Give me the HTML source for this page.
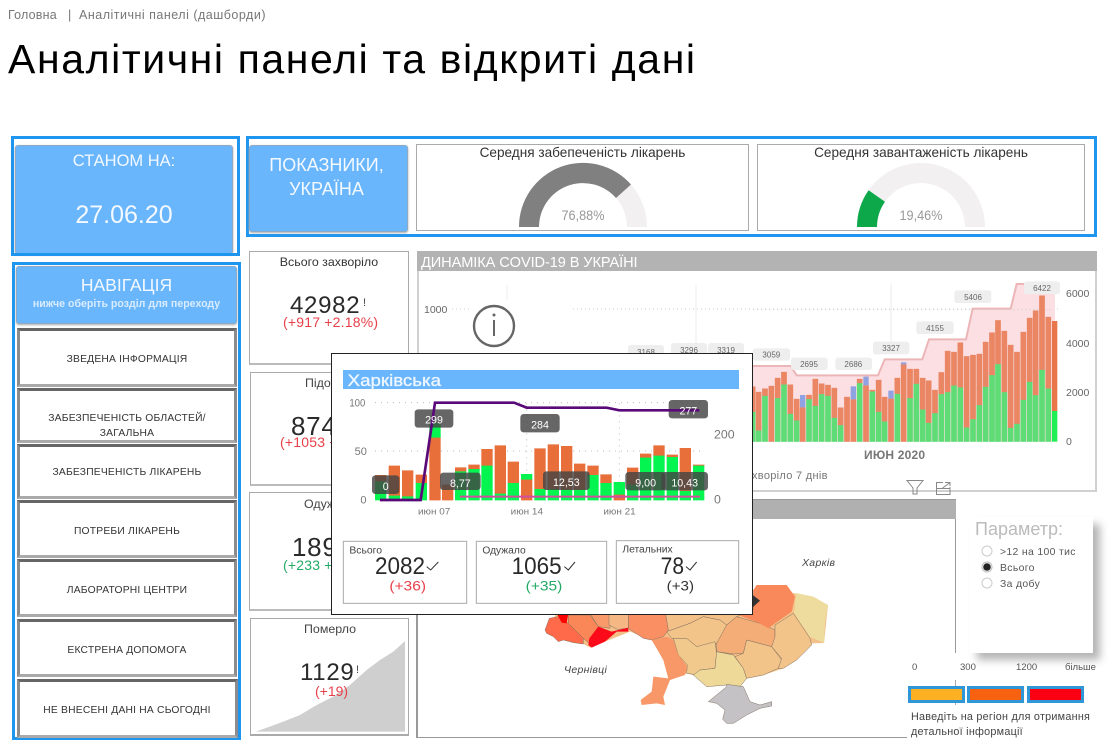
<!DOCTYPE html>
<html lang="uk"><head><meta charset="utf-8"><title>Аналітичні панелі та відкриті дані</title>
<style>
html,body{margin:0;padding:0;background:#fff;width:1113px;height:753px;overflow:hidden;font-family:"Liberation Sans","DejaVu Sans",sans-serif}
.a{position:absolute;box-sizing:border-box}
.t{position:absolute;white-space:nowrap;line-height:1}
.c{text-align:center}
.frame{border:3px solid #1e96f0}
.blue{background:#69b6fd;border:1px solid #8ea9c4;border-radius:3px;box-shadow:0 1px 2px #aaa}
.w{color:#f4f9ff}
.card{border:1px solid #aaa;background:#fff}
.nav{left:17px;width:220px;background:#fff;border:3px solid #8c8c8c;border-top-color:#666;border-bottom-color:#aaa}
.n{left:17px;width:220px;font-size:10.3px;letter-spacing:.2px;color:#333;text-align:center}
.num{font-size:24px;letter-spacing:.7px;color:#2a2a2a}
.red{color:#e8404a}.grn{color:#22aa66}
svg{position:absolute;overflow:visible}
svg text{font-family:"Liberation Sans","DejaVu Sans",sans-serif}
</style></head><body>

<div class="t" style="left:8px;top:9px;font-size:12.5px;letter-spacing:.2px;color:#777">Головна</div>
<div class="t" style="left:68px;top:9px;font-size:12.5px;color:#777">|</div>
<div class="t" style="left:79px;top:9px;font-size:12.5px;letter-spacing:.5px;color:#777">Аналітичні панелі (дашборди)</div>
<h1 class="t" style="margin:0;left:8px;top:39px;font-size:41px;font-weight:400;letter-spacing:1.6px;color:#000">Аналітичні панелі та відкриті дані</h1>

<!-- date -->
<div class="a blue" style="left:15px;top:145px;width:218px;height:109px"></div>
<div class="a frame" style="left:11px;top:136px;width:229px;height:120px"></div>
<div class="t c w" style="left:15px;width:218px;top:153px;font-size:16.5px">СТАНОМ НА:</div>
<div class="t c w" style="left:15px;width:218px;top:203px;font-size:25px">27.06.20</div>

<!-- indicators -->
<div class="a frame" style="left:246px;top:136px;width:851px;height:101px"></div>
<div class="a blue" style="left:249px;top:145px;width:159px;height:87px"></div>
<div class="t c w" style="left:247px;width:159px;top:153px;font-size:18px;line-height:24px">ПОКАЗНИКИ,<br>УКРАЇНА</div>
<div class="a card" style="left:416px;top:144px;width:333px;height:87px"></div>
<div class="a card" style="left:757px;top:144px;width:328px;height:87px"></div>
<div class="t c" style="left:416px;width:333px;top:146px;font-size:13.6px;color:#333">Середня забепеченість лікарень</div>
<div class="t c" style="left:757px;width:328px;top:146px;font-size:13.6px;color:#333">Середня завантаженість лікарень</div>
<svg style="left:0;top:0" width="1113" height="753">
<path d="M519 227A64 64 0 0 1 647 227H627A44 44 0 0 0 539 227Z" fill="#f2f0f0"/>
<path d="M519 227A64 64 0 0 1 631 184.5L616 198A44 44 0 0 0 539 227Z" fill="#808080"/>
<path d="M857 227A64 64 0 0 1 985 227H965A44 44 0 0 0 877 227Z" fill="#f2f0f0"/>
<path d="M857 227A64 64 0 0 1 868.6 190.3L885 201.8A44 44 0 0 0 877 227Z" fill="#0da84a"/>
<text x="583" y="220" text-anchor="middle" font-size="14" fill="#999" textLength="43" lengthAdjust="spacingAndGlyphs">76,88%</text>
<text x="921" y="220" text-anchor="middle" font-size="14" fill="#999" textLength="43" lengthAdjust="spacingAndGlyphs">19,46%</text>
</svg>

<!-- KPI cards -->
<div class="a card" style="left:249px;top:251px;width:160px;height:114px;border-bottom:2px solid #bbb"></div>
<div class="t c" style="left:249px;width:160px;top:256px;font-size:12.4px;color:#333">Всього захворіло</div>
<div class="t num" style="left:290px;top:294px">42982</div><div class="t" style="left:363px;top:298px;font-size:11px;color:#444">!</div>
<div class="t red" style="left:283px;top:315px;font-size:14px;letter-spacing:.2px">(+917 +2.18%)</div>

<div class="a card" style="left:250px;top:372px;width:159px;height:114px;border-bottom:2px solid #bbb"></div>
<div class="t" style="left:305px;top:377px;font-size:12.4px;color:#444">Підозри</div>
<div class="t num" style="left:291px;top:413px;font-size:26px">8741</div>
<div class="t red" style="left:280px;top:435px;font-size:14px;letter-spacing:.2px">(+1053 +1%)</div>

<div class="a card" style="left:249px;top:492px;width:160px;height:119px;border-bottom:2px solid #bbb"></div>
<div class="t" style="left:304px;top:498px;font-size:12.4px;color:#444">Одужало</div>
<div class="t num" style="left:292px;top:534px;font-size:26px">18900</div>
<div class="t grn" style="left:283px;top:558px;font-size:14px;letter-spacing:.2px">(+233 +1%)</div>

<div class="a" style="left:250px;top:618px;width:159px;height:118px;border:1px solid #aaa;border-width:1px 1px 2px 1px"></div>
<svg style="left:0;top:500px" width="420" height="253" viewBox="0 0 1260 759" preserveAspectRatio="none">
<path d="M768 695L850 665L900 645L950 615L1000 590L1050 555L1100 510L1140 480L1180 455L1215 423V695Z" fill="#cfcfcf"/>
</svg>
<div class="t c" style="left:250px;width:160px;top:623px;font-size:12.4px;color:#444">Померло</div>
<div class="t num" style="left:300px;top:661px">1129</div><div class="t" style="left:356px;top:665px;font-size:11px;color:#444">!</div>
<div class="t red" style="left:315px;top:684px;font-size:14px">(+19)</div>

<!-- nav -->
<div class="a frame" style="left:12px;top:262px;width:229px;height:478px"></div>
<div class="a blue" style="left:16px;top:266px;width:221px;height:58px"></div>
<div class="t c w" style="left:16px;width:221px;top:277px;font-size:17.5px">НАВІГАЦІЯ</div>
<div class="t c" style="left:16px;width:221px;top:299px;font-size:10.6px;font-weight:700;color:#d9ecff">нижче оберіть розділ для переходу</div>
<div class="a nav" style="top:328px;height:59px"></div>
<div class="a nav" style="top:388px;height:55px"></div>
<div class="a nav" style="top:444px;height:55px"></div>
<div class="a nav" style="top:500px;height:58px"></div>
<div class="a nav" style="top:559px;height:58px"></div>
<div class="a nav" style="top:619px;height:58px"></div>
<div class="a nav" style="top:679px;height:59px;left:17px;width:221px"></div>
<div class="t n" style="top:355px">ЗВЕДЕНА ІНФОРМАЦІЯ</div>
<div class="t n" style="top:414px">ЗАБЕЗПЕЧЕНІСТЬ ОБЛАСТЕЙ/</div>
<div class="t n" style="top:429px">ЗАГАЛЬНА</div>
<div class="t n" style="top:468px">ЗАБЕЗПЕЧЕНІСТЬ ЛІКАРЕНЬ</div>
<div class="t n" style="top:527px">ПОТРЕБИ ЛІКАРЕНЬ</div>
<div class="t n" style="top:586px">ЛАБОРАТОРНІ ЦЕНТРИ</div>
<div class="t n" style="top:646px">ЕКСТРЕНА ДОПОМОГА</div>
<div class="t n" style="top:706px">НЕ ВНЕСЕНІ ДАНІ НА СЬОГОДНІ</div>

<!-- main chart -->
<div class="a" style="left:417px;top:251px;width:680px;height:241px;border:2px solid #d0d0d0;border-top:0;background:#fff"></div>
<div class="a" style="left:417px;top:251px;width:680px;height:20px;background:#b3b3b3"></div>
<div class="t" style="left:421px;top:256px;font-size:14.6px;color:#fff;letter-spacing:-.1px">ДИНАМІКА COVID-19 В УКРАЇНІ</div>
<svg style="left:0;top:0" width="1113" height="753">
<line x1="507" y1="285" x2="507" y2="300" stroke="#eee"/>
<line x1="696" y1="285" x2="696" y2="345" stroke="#eee"/>
<line x1="891" y1="285" x2="891" y2="345" stroke="#eee"/>
<line x1="452" y1="309" x2="470" y2="309" stroke="#ccc" stroke-dasharray="1 3"/>
<line x1="573" y1="309" x2="1058" y2="309" stroke="#ccc" stroke-dasharray="1 3"/>
<text x="424" y="313" font-size="10.5" fill="#666">1000</text>
<circle cx="494" cy="326" r="20" fill="#fff" stroke="#666" stroke-width="2.4"/>
<path d="M494 320V336" stroke="#666" stroke-width="2"/><circle cx="494" cy="315" r="1.5" fill="#666"/>
<g font-size="10.5" fill="#666">
<text x="1066" y="297">6000</text><text x="1066" y="347">4000</text><text x="1066" y="396">2000</text><text x="1066" y="445">0</text>
</g>
<g fill="#eeeeee"><rect x="628" y="345" width="36" height="14" rx="3"/><rect x="671" y="343" width="36" height="14" rx="3"/><rect x="708" y="343" width="36" height="14" rx="3"/></g>
<g font-size="8" fill="#666" text-anchor="middle"><text x="646" y="355">3168</text><text x="689" y="353">3296</text><text x="726" y="353">3319</text></g>
</svg>
<svg style="left:750px;top:270px" width="320" height="180" viewBox="0 0 960 540">
<path d="M8 288H122L140 316H384L404 268H517L537 208H648L668 116H782L800 42H915V515H8Z" fill="#fbdfe3"/>
<path d="M8 288H122L140 316H384L404 268H517L537 208H648L668 116H782L800 42H915" fill="none" stroke="#ecb6b8" stroke-width="6"/>
<line x1="10" y1="119" x2="910" y2="119" stroke="#ccc" stroke-width="3" stroke-dasharray="3 9"/>
<line x1="424" y1="40" x2="424" y2="212" stroke="#eee" stroke-width="2"/>
<path fill="#ea8664" stroke="#ea8664" d="M0 350V426h16V350zM18 366V482h16V366zM37 356V378h16V356zM56 348V515h16V348zM75 324V385h16V324zM94 306V344h16V306zM113 344V432h16V344zM132 387V452h16V387zM150 412V515h16V412zM169 375V388h16V375zM188 327V408h16V327zM207 341V373h16V341zM226 345V378h16V345zM245 354V444h16V354zM264 413V466h16V413zM283 381V515h16V381zM302 388V515h16V388zM321 327V340h16V327zM340 346V515h16V346zM359 360V365h16V360zM378 330V426h16V330zM396 381V455h16V381zM415 386V515h16V386zM434 324V372h16V324zM453 283V515h16V283zM472 297V385h16V297zM491 297V342h16V297zM510 324V419h16V324zM528 332V459h16V332zM547 360V430h16V360zM566 307V373h16V307zM585 243V367h16V243zM604 246V347h16V246zM623 218V353h16V218zM642 259V473h16V259zM661 255V448h16V255zM680 252V406h16V252zM699 216V351h16V216zM718 188V316h16V188zM736 151V283h16V151zM755 183V367h16V183zM774 225V474h16V225zM793 246V462h16V246zM812 186V390h16V186zM831 144V336h16V144zM849 122V376h16V122zM868 77V300h16V77zM887 141V356h16V141z"/>
<path fill="#e8764a" d="M906 153V423h16V153z"/>
<path fill="#5fdc76" stroke="#5fdc76" d="M0 426V515h16V426zM18 482V515h16V482zM37 378V515h16V378zM75 385V515h16V385zM94 344V515h16V344zM113 432V515h16V432zM132 452V515h16V452zM169 388V515h16V388zM188 408V515h16V408zM207 373V515h16V373zM226 378V515h16V378zM245 444V515h16V444zM264 466V515h16V466zM321 340V515h16V340zM359 365V515h16V365zM378 426V515h16V426zM396 455V515h16V455zM434 372V515h16V372zM472 385V515h16V385zM491 342V515h16V342zM510 419V515h16V419zM528 459V515h16V459zM547 430V515h16V430zM566 373V515h16V373zM585 367V515h16V367zM604 347V515h16V347zM623 353V515h16V353zM642 473V515h16V473zM661 448V515h16V448zM680 406V515h16V406zM699 351V515h16V351zM718 316V515h16V316zM736 283V515h16V283zM755 367V515h16V367zM774 474V515h16V474zM793 462V515h16V462zM812 390V515h16V390zM831 336V515h16V336zM849 376V515h16V376zM868 300V515h16V300zM887 356V515h16V356z"/>
<path fill="#20ee55" d="M906 423V515h16V423z"/>
<path fill="#8fa2e2" d="M150 375V412h16V375zM302 349V388h16V349zM340 320V346h16V320zM415 362V386h16V362zM453 277V283h16V277z"/>
<g fill="#eeeeee"><rect x="8" y="235" width="112" height="37" rx="8"/><rect x="123" y="263" width="110" height="37" rx="8"/><rect x="256" y="263" width="110" height="37" rx="8"/><rect x="369" y="215" width="109" height="38" rx="8"/><rect x="499" y="154" width="112" height="38" rx="8"/><rect x="613" y="61" width="111" height="38" rx="8"/><rect x="822" y="34" width="108" height="38" rx="8"/></g>
<g font-size="24" fill="#666" text-anchor="middle"><text x="64" y="263">3059</text><text x="177" y="291">2695</text><text x="310" y="291">2686</text><text x="423" y="243">3327</text><text x="555" y="183">4155</text><text x="669" y="90">5406</text><text x="876" y="63">6422</text></g>
</svg>
<div class="t" style="left:864px;top:449px;font-size:12px;color:#777;font-weight:700;letter-spacing:.2px">ИЮН 2020</div>
<div class="t" style="left:752px;top:471px;font-size:11px;letter-spacing:.3px;color:#777">хворіло 7 днів</div>

<!-- map -->
<div class="a" style="left:416px;top:499px;width:540px;height:239px;border-left:2px solid #999;border-bottom:1px solid #999;background:#fff"></div>
<div class="a" style="left:955px;top:499px;width:1px;height:154px;background:#999"></div>
<div class="a" style="left:955px;top:680px;width:1px;height:25px;background:#aaa"></div>
<div class="a" style="left:907px;top:736px;width:50px;height:3px;background:#fff"></div>
<div class="a" style="left:416px;top:499px;width:540px;height:20px;background:#b0b0b0;border-top:1px solid #999"></div>
<svg style="left:900px;top:475px" width="60" height="22" viewBox="0 0 60 22">
<path d="M7 5.500H23L17 13V19H13V13Z" fill="none" stroke="#888" stroke-width="1"/>
<path d="M36.500 13.500H50V19.500H36.500ZM36.500 13.500V7.500H43M50 13.500V12M42 13.500L50 7.500M45 7.500H50V11" fill="none" stroke="#888" stroke-width="1"/>
</svg>
<svg style="left:530px;top:580px" width="290" height="150" viewBox="0 0 870 450">
<path fill="#f3c088" d="M45 150L80 100L400 60L670 30L795 40L894 75L882 189L840 190L800 240L760 265L700 285L650 295L630 320L590 315L530 320L490 285L470 280L420 300L415 295L400 240L380 205L365 180L300 155L225 185L180 203L160 192L100 180Z"/>
<g stroke="#7a6a5c" stroke-width="1.4" stroke-linejoin="round">
<path fill="#f3c088" d="M400 60L670 60L670 90L620 110L590 135L570 120L520 110L480 130L410 155Z"/>
<path fill="#ff6b4a" d="M45 150L58 115L85 110L115 130L160 175L160 192L130 188L100 180L85 185L70 170L50 160Z"/>
<path fill="#f98757" d="M115 105L180 105L205 140L178 190L160 175L115 130Z"/>
<path fill="#f00" d="M80 100L115 100L110 130L95 128Z" stroke="none"/>
<path fill="#f99a6a" d="M180 60L240 60L240 145L205 140L180 100Z"/>
<path fill="#f5b784" d="M237 60L295 60L295 145L262 148L237 135Z"/>
<path fill="#fb0b1a" stroke="none" d="M205 140L245 155L295 143L295 155L260 155L225 185L185 203L175 195L178 175Z"/>
<path fill="#fa8f63" d="M295 60H400L415 150L400 170L365 180L340 175L295 145Z"/>
<path fill="#f2c489" d="M410 155L480 130L520 110L570 120L590 135L580 165L555 195L500 200L470 175L425 175Z"/>
<path fill="#f2c98c" d="M430 175L470 175L500 200L555 185L560 220L555 265L510 270L505 285L470 280L472 255L445 225Z"/>
<path fill="#f89767" stroke="none" d="M365 180L410 170L430 180L445 225L472 260L465 285L420 300L400 350L405 375L380 370L335 375L332 360L365 335L370 290L415 295L400 240L380 205Z"/>
<path fill="#efd998" d="M560 215L610 225L640 265L650 295L630 320L590 315L530 320L490 285L510 270L555 265Z"/>
<path fill="#f4ad77" d="M590 135L620 110L690 130L735 150L735 175L725 200L650 180L640 220L610 222L560 215L560 190Z"/>
<path fill="#f2c48a" d="M650 180L725 200L755 240L745 265L700 285L650 295L640 265L615 230L640 220Z"/>
<path fill="#f2c48a" d="M735 135L790 100L840 175L845 195L800 240L760 265L745 265L755 235L725 200L735 170Z"/>
<path fill="#eedb9e" d="M798 39L850 50L894 75L885 130L882 189L840 171L792 99Z" stroke="none"/>
<path fill="#f9885a" d="M670 30L680 15L735 15L770 15L795 50L785 95L735 130L715 145L690 130L625 105L670 90Z" stroke="none"/>
<path fill="#c4c2c4" d="M535 365L590 320L590 313L640 320L660 365L690 375L725 365L725 378L690 385L650 405L610 430L590 430L578 418L585 390L560 370Z"/>
</g>
<path d="M668 45L690 62L668 82Z" fill="#333"/>
</svg>
<div class="t" style="left:802px;top:558px;font-size:10.5px;font-style:italic;letter-spacing:.3px;color:#444">Харків</div>
<div class="t" style="left:564px;top:665px;font-size:10.5px;font-style:italic;letter-spacing:.3px;color:#444">Чернівці</div>

<!-- param -->
<div class="a" style="left:970px;top:517px;width:123px;height:136px;background:#fff;box-shadow:7px 7px 8px #b5b5b5"></div>
<div class="t" style="left:975px;top:520px;font-size:18px;color:#bbb">Параметр:</div>
<svg style="left:0;top:0" width="1113" height="753">
<circle cx="987" cy="551" r="5" fill="#fff" stroke="#ccc"/>
<circle cx="987" cy="567" r="5" fill="#fff" stroke="#bbb"/><circle cx="987" cy="567" r="3.800" fill="#222"/>
<circle cx="987" cy="583" r="5" fill="#fff" stroke="#ccc"/>
</svg>
<div class="t" style="left:1000px;top:548px;font-size:10.400px;letter-spacing:.35px;color:#555">&gt;12 на 100 тис</div>
<div class="t" style="left:1000px;top:564px;font-size:10.400px;letter-spacing:.35px;color:#555">Всього</div>
<div class="t" style="left:1000px;top:580px;font-size:10.400px;letter-spacing:.35px;color:#555">За добу</div>

<div class="t" style="left:912px;top:663px;font-size:9.500px;color:#555">0</div>
<div class="t" style="left:960px;top:663px;font-size:9.500px;color:#555">300</div>
<div class="t" style="left:1016px;top:663px;font-size:9.500px;color:#555">1200</div>
<div class="t" style="left:1065px;top:663px;font-size:9.500px;color:#555">більше</div>
<div class="a" style="left:908px;top:686px;width:57px;height:17px;background:#fcb022;border:3px solid #2f96d8"></div>
<div class="a" style="left:967px;top:686px;width:57px;height:17px;background:#f8610f;border:3px solid #2f96d8"></div>
<div class="a" style="left:1027px;top:686px;width:57px;height:17px;background:#fb0012;border:3px solid #2f96d8"></div>
<div class="t" style="left:911px;top:712px;font-size:10.800px;letter-spacing:.25px;color:#444">Наведіть на регіон для отримання</div>
<div class="t" style="left:911px;top:727px;font-size:10.800px;letter-spacing:.25px;color:#444">детальної інформації</div>

<!-- popup -->
<div class="a" style="left:331px;top:353px;width:422px;height:262px;background:#fff;border:1px solid #222"></div>
<svg style="left:330px;top:350px" width="425" height="270" viewBox="0 0 1275 810">
<rect x="39" y="60" width="1188" height="57" fill="#69b6fd"/>
<text x="53" y="108" font-size="50" fill="#eef6ff" stroke="#eef6ff" stroke-width="1" textLength="280" lengthAdjust="spacingAndGlyphs">Харківська</text>
<g stroke="#bbb" stroke-width="3" stroke-dasharray="3 15"><line x1="135" y1="158" x2="1110" y2="158"/><line x1="135" y1="303" x2="1110" y2="303"/><line x1="590" y1="160" x2="590" y2="440"/><line x1="868" y1="160" x2="868" y2="440"/></g>
<g font-size="33" fill="#777">
<text x="58" y="170" textLength="48" lengthAdjust="spacingAndGlyphs">100</text><text x="74" y="315">50</text><text x="91" y="461">0</text>
<text x="1152" y="266" font-size="37">200</text><text x="1152" y="461" font-size="37">0</text>
<text x="264" y="494" font-size="28" textLength="97" lengthAdjust="spacingAndGlyphs">июн 07</text>
<text x="542" y="494" font-size="28" textLength="97" lengthAdjust="spacingAndGlyphs">июн 14</text>
<text x="820" y="494" font-size="28" textLength="97" lengthAdjust="spacingAndGlyphs">июн 21</text>
</g>
<path fill="#e86f3a" stroke="#e86f3a" stroke-width="2" d="M136 376V395h32V376zM177 348V438h32V348zM217 362V440h32V362zM258 375V400h32V375zM299 262V450h32V262zM337 405V450h32V405zM376 353V365h32V353zM416 345V358h32V345zM455 298V348h32V298zM495 287V432h32V287zM534 336V400h32V336zM574 388V450h32V388zM614 296V418h32V296zM654 284V418h32V284zM694 289V420h32V289zM733 342V420h32V342zM773 348V376h32V348zM812 374V400h32V374zM852 433V450h32V433zM892 354V405h32V354zM931 312V324h32V312zM971 287V318h32V287zM1011 315V322h32V315zM1050 295V424h32V295zM1090 345V348h32V345z"/>
<path fill="#05f550" stroke="#05f550" stroke-width="2" d="M136 395V450h32V395zM177 438V450h32V438zM217 440V450h32V440zM258 400V450h32V400zM299 220V262h32V220zM376 365V450h32V365zM416 358V450h32V358zM455 348V450h32V348zM495 432V450h32V432zM534 400V450h32V400zM574 373V388h32V373zM614 418V450h32V418zM654 418V450h32V418zM694 420V450h32V420zM733 420V450h32V420zM773 376V450h32V376zM812 400V450h32V400zM852 397V433h32V397zM892 405V450h32V405zM931 324V450h32V324zM971 318V450h32V318zM1011 322V450h32V322zM1050 424V450h32V424zM1090 348V450h32V348z"/>
<path d="M390 440H1110" stroke="#d24da0" stroke-width="6" fill="none"/>
<g fill="#444" fill-opacity=".82">
<rect x="126" y="376" width="82" height="56" rx="10"/><rect x="254" y="178" width="116" height="55" rx="10"/><rect x="330" y="368" width="122" height="52" rx="10"/><rect x="571" y="192" width="118" height="55" rx="10"/><rect x="639" y="364" width="140" height="56" rx="10"/><rect x="886" y="366" width="120" height="55" rx="10"/><rect x="994" y="366" width="140" height="55" rx="10"/><rect x="1016" y="150" width="118" height="55" rx="10"/>
</g>
<path d="M150 450H272L315 158H552L590 173H830L868 181H1108" fill="none" stroke="#5a0a78" stroke-width="8"/>
<g font-size="32" fill="#fff" text-anchor="middle"><text x="167" y="420">0</text><text x="312" y="221">299</text><text x="391" y="411">8,77</text><text x="630" y="236">284</text><text x="709" y="408">12,53</text><text x="947" y="410">9,00</text><text x="1064" y="410">10,43</text><text x="1075" y="194">277</text></g>
<g fill="#fff" stroke="#aaa" stroke-width="3"><rect x="40" y="574" width="370" height="186"/><rect x="439" y="574" width="391" height="186"/><rect x="859" y="572" width="367" height="188"/></g>
<g font-size="30" fill="#444"><text x="58" y="611" textLength="98" lengthAdjust="spacingAndGlyphs">Всього</text><text x="457" y="611" textLength="130" lengthAdjust="spacingAndGlyphs">Одужало</text><text x="877" y="608" textLength="151" lengthAdjust="spacingAndGlyphs">Летальних</text></g>
<g font-size="72" fill="#2a2a2a"><text x="135" y="672" textLength="150" lengthAdjust="spacingAndGlyphs">2082</text><text x="545" y="672" textLength="150" lengthAdjust="spacingAndGlyphs">1065</text><text x="992" y="672" textLength="70" lengthAdjust="spacingAndGlyphs">78</text></g>
<g fill="none" stroke="#333" stroke-width="3"><path d="M290 650L302 660L325 636"/><path d="M703 650L715 660L735 636"/><path d="M1068 650L1080 660L1100 636"/></g>
<text x="178" y="722" font-size="42" fill="#e8404a" textLength="110" lengthAdjust="spacingAndGlyphs">(+36)</text>
<text x="587" y="722" font-size="42" fill="#22aa66" textLength="110" lengthAdjust="spacingAndGlyphs">(+35)</text>
<text x="1010" y="722" font-size="42" fill="#333" textLength="82" lengthAdjust="spacingAndGlyphs">(+3)</text>
</svg>
</body></html>
